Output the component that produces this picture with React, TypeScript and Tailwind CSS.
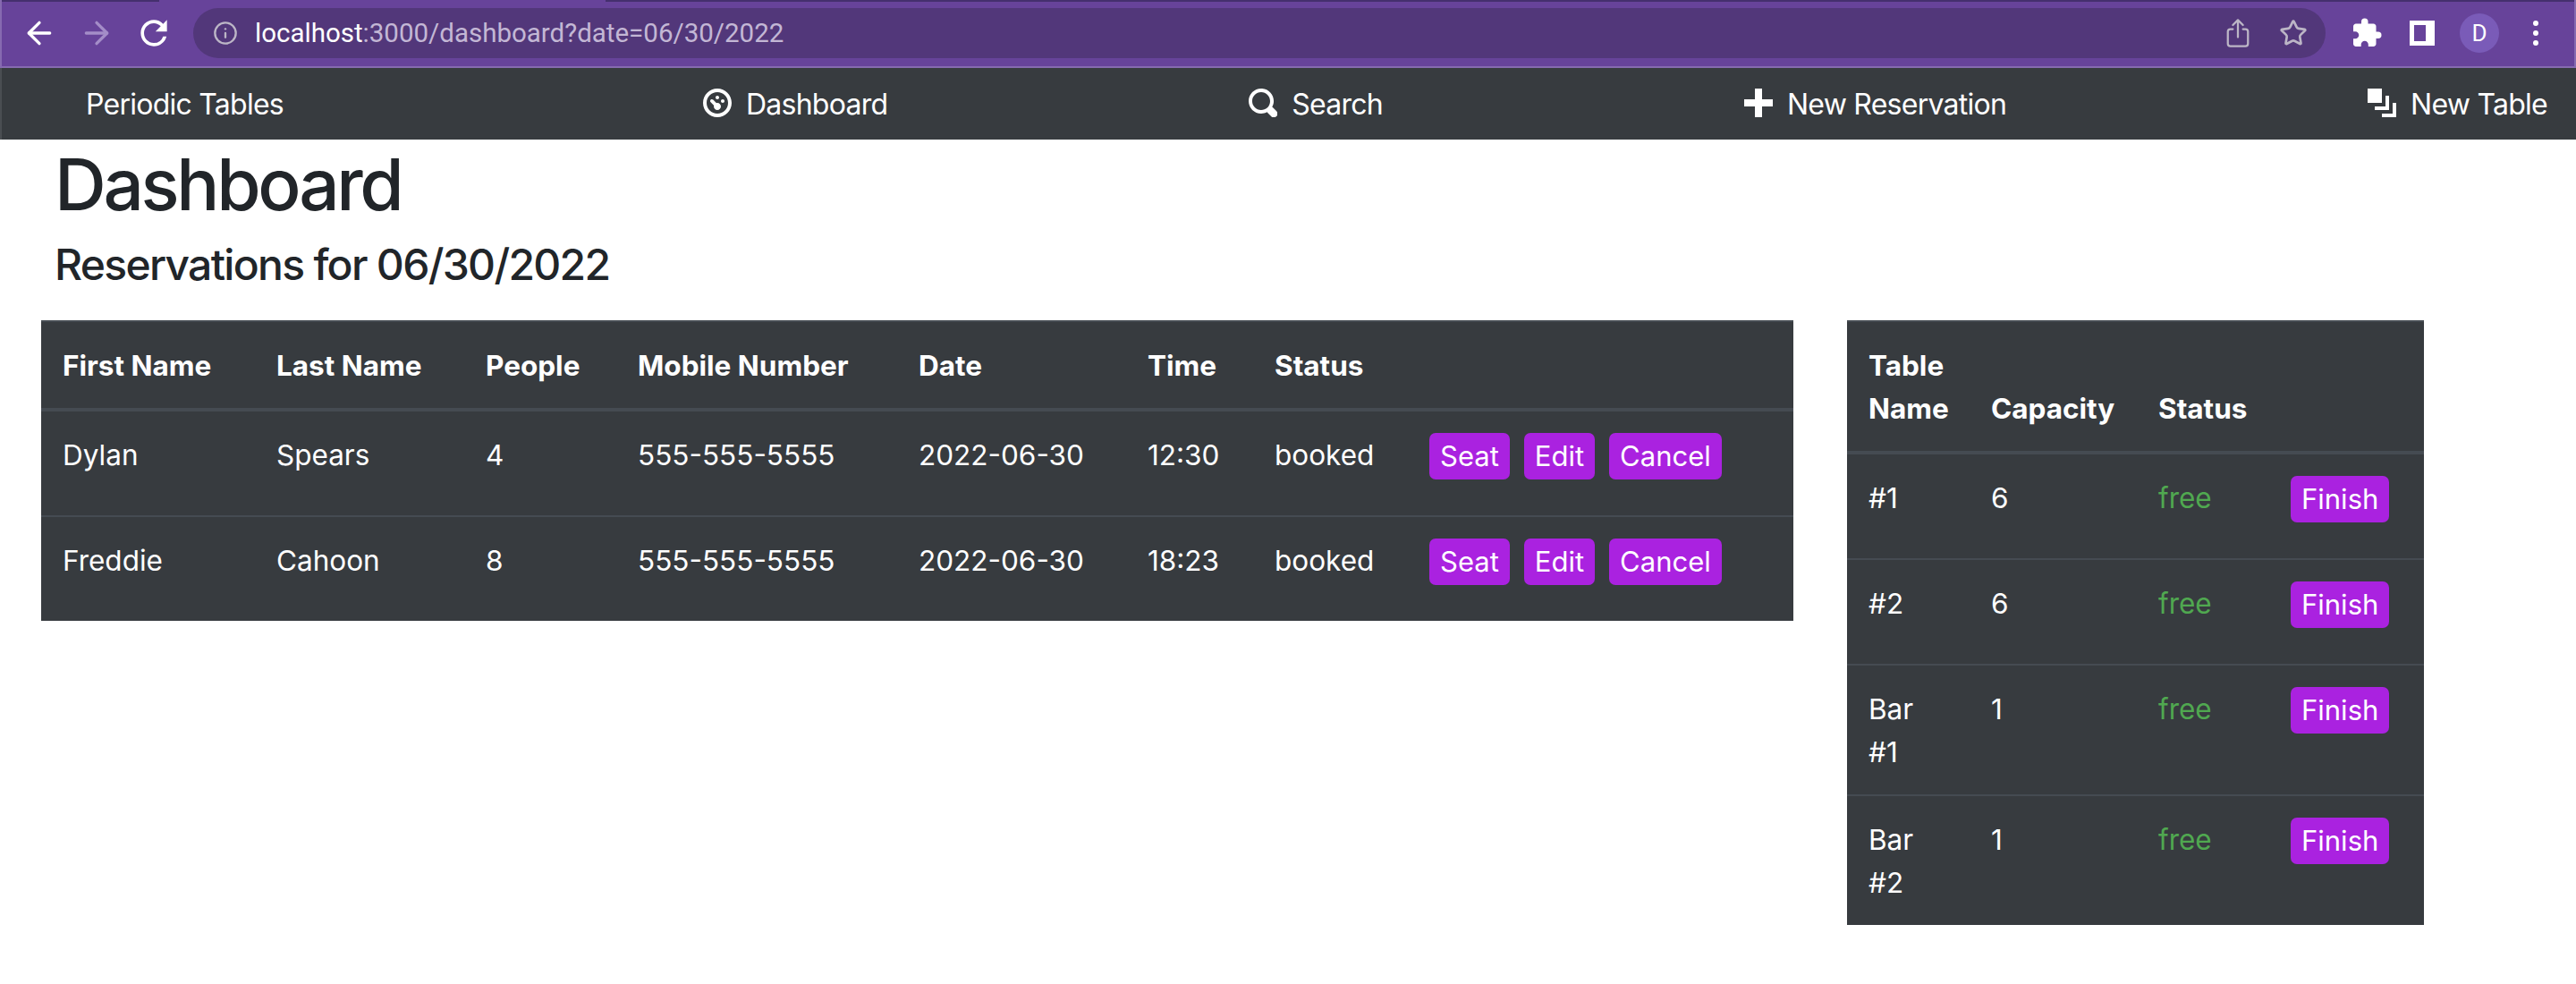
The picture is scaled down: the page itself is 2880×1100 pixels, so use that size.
import { ArrowLeft, ArrowRight, Info, Star } from "lucide-react";
import { IoShareOutline } from "react-icons/io5";
import { MdExtension, MdRefresh } from "react-icons/md";

const reservations = [
  { first: "Dylan", last: "Spears", people: 4, mobile: "555-555-5555", date: "2022-06-30", time: "12:30" },
  { first: "Freddie", last: "Cahoon", people: 8, mobile: "555-555-5555", date: "2022-06-30", time: "18:23" },
];

const tables = [
  { name: "#1", capacity: 6 },
  { name: "#2", capacity: 6 },
  { name: "Bar #1", capacity: 1 },
  { name: "Bar #2", capacity: 1 },
];

function NavIcon({ d }: { d: string }) {
  return (
    <svg viewBox="0 0 8 8" className="h-8 w-8 fill-white">
      <path d={d} />
    </svg>
  );
}

function NavItem({ d, label }: { d: string; label: string }) {
  return (
    <div className="flex items-center gap-[16px]">
      <div className="-mt-[3px]">
        <NavIcon d={d} />
      </div>
      <span className="pt-[1px]">{label}</span>
    </div>
  );
}

function ActionButton({ label }: { label: string }) {
  return (
    <button className="h-[52px] rounded-[7px] bg-[#aa22e0] px-[12px] text-[31px] leading-[52px] text-white">
      {label}
    </button>
  );
}

function BrowserBar() {
  return (
    <div className="relative h-[76px] border-b-2 border-x-2 border-[#866ab0] border-t-0 bg-[#67439a]">
      {/* tab strip remnants */}
      <div className="absolute left-0 top-0 h-[2px] w-[176px] bg-[#452f6e]" />
      <div className="absolute left-[675px] right-0 top-0 h-[2px] bg-[#452f6e]" />
      <div className="flex h-[74px] items-center pl-[22px] pr-[32px]">
        <ArrowLeft className="h-10 w-10 text-white" strokeWidth={2} />
        <ArrowRight className="ml-[24px] h-10 w-10 text-[#a48dc8]" strokeWidth={2} />
        <MdRefresh className="ml-[22px] h-[44px] w-[44px] text-white" />
        <div className="ml-[22px] flex h-[56px] w-[2384px] shrink-0 items-center rounded-full bg-[#52377a] pl-[22px] pr-[18px] font-['Roboto',sans-serif] text-[29.5px] text-[#c3b7d5]">
          <Info className="h-[28px] w-[28px] text-[#bcb6c6]" strokeWidth={2} />
          <span className="ml-[19px]">
            <span className="text-white">localhost</span>:3000/dashboard?date=06/30/2022
          </span>
          <div className="ml-auto flex items-center gap-[28px] pr-[2px]">
            <IoShareOutline className="h-[36px] w-[36px] text-[#bcb6c6]" />
            <Star className="h-[32px] w-[32px] text-[#bcb6c6]" strokeWidth={2} />
          </div>
        </div>
        <MdExtension className="ml-[28px] h-[36px] w-[36px] text-white" />
        <div className="ml-[30px] h-[28px] w-[28px] border-[5px] border-r-[10px] border-white bg-[#67439a]" />
        <div className="ml-[28px] flex h-[44px] w-[44px] items-center justify-center rounded-full bg-[#7a5bb8] font-['Roboto',sans-serif] text-[26px] text-white">
          D
        </div>
        <div className="ml-[38px] flex flex-col gap-[5px]">
          <div className="h-[6px] w-[6px] rounded-full bg-white" />
          <div className="h-[6px] w-[6px] rounded-full bg-white" />
          <div className="h-[6px] w-[6px] rounded-full bg-white" />
        </div>
      </div>
    </div>
  );
}

function TopNav() {
  return (
    <div className="flex h-[80px] items-center justify-between border-l-2 border-[#4a4e52] bg-[#373b3f] pl-[94px] pr-[32px] text-[32px] tracking-[-0.75px] text-white">
      <span className="pr-[65px] pt-[1px]">Periodic Tables</span>
      <NavItem
        label="Dashboard"
        d="M4 0c-2.2 0-4 1.8-4 4s1.8 4 4 4 4-1.8 4-4-1.8-4-4-4zm0 1c1.66 0 3 1.34 3 3s-1.34 3-3 3-3-1.34-3-3 1.34-3 3-3zm0 1c-.28 0-.5.22-.5.5s.22.5.5.5.5-.22.5-.5-.22-.5-.5-.5zm-1.66 1a.5.5 0 0 0-.19.84l.91.91c-.02.08-.06.16-.06.25 0 .55.45 1 1 1s1-.45 1-1-.45-1-1-1c-.09 0-.17.04-.25.06l-.91-.91a.5.5 0 0 0-.44-.16.5.5 0 0 0-.06 0zm3.16 0c-.28 0-.5.22-.5.5s.22.5.5.5.5-.22.5-.5-.22-.5-.5-.5z"
      />
      <NavItem
        label="Search"
        d="M3.5 0c-1.93 0-3.5 1.57-3.5 3.5s1.57 3.5 3.5 3.5c.59 0 1.17-.14 1.66-.41a1 1 0 0 0 .13.13l1 1a1.02 1.02 0 1 0 1.44-1.44l-1-1a1 1 0 0 0-.16-.13c.27-.49.44-1.06.44-1.66 0-1.93-1.57-3.5-3.5-3.5zm0 1c1.39 0 2.5 1.11 2.5 2.5 0 .66-.24 1.27-.66 1.72-.01.01-.02.02-.03.03a1 1 0 0 0-.13.13c-.44.4-1.04.63-1.69.63-1.39 0-2.5-1.11-2.5-2.5s1.11-2.5 2.5-2.5z"
      />
      <NavItem label="New Reservation" d="M3 0v3h-3v2h3v3h2v-3h3v-2h-3v-3h-2z" />
      <NavItem label="New Table" d="M0 0v4h4v-4h-4zm5 2v3h-3v1h4v-4h-1zm2 2v3h-3v1h4v-4h-1z" />
    </div>
  );
}

export default function App() {
  const th = "border-t-2 border-b-4 border-[#454b52] px-[24px] pt-[25px] pb-[23px] text-left align-bottom font-bold";
  const td = "border-t-2 border-[#454b52] px-[24px] pt-[25px] pb-[23px] align-top";
  const first = "px-[24px] pt-[25px] pb-[23px] align-top";
  const cols = ["w-[239px]", "w-[234px]", "w-[170px]", "w-[314px]", "w-[256px]", "w-[142px]", "w-[173px]", "w-[431px]"];
  const sideCols = ["w-[137px]", "w-[187px]", "w-[148px]", "w-[173px]"];

  return (
    <div className="min-h-[1100px] bg-white font-['Inter',sans-serif] text-[31.5px] leading-[48px]">
      <BrowserBar />
      <TopNav />

      <div className="pl-[61px] pt-[2px] text-[#212529]">
        <h1 className="text-[80px] leading-[96px] font-medium tracking-[-3.3px]">Dashboard</h1>
        <h2 className="mt-[13px] text-[48px] leading-[58px] font-medium tracking-[-1.7px]">Reservations for 06/30/2022</h2>
      </div>

      <div className="mt-[33px] flex items-start pl-[46px] text-white">
        <table className="w-[1959px] table-fixed border-separate border-spacing-0 bg-[#373b3f]">
          <colgroup>
            {cols.map((c) => (
              <col key={c} className={c} />
            ))}
          </colgroup>
          <thead>
            <tr>
              <th className={th}>First Name</th>
              <th className={th}>Last Name</th>
              <th className={th}>People</th>
              <th className={th}>Mobile Number</th>
              <th className={th}>Date</th>
              <th className={th}>Time</th>
              <th className={th}>Status</th>
              <th className={th}></th>
            </tr>
          </thead>
          <tbody>
            {reservations.map((r, i) => (
              <tr key={r.first}>
                <td className={i ? td : first}>{r.first}</td>
                <td className={i ? td : first}>{r.last}</td>
                <td className={i ? td : first}>{r.people}</td>
                <td className={i ? td : first}>{r.mobile}</td>
                <td className={i ? td : first}>{r.date}</td>
                <td className={i ? td : first}>{r.time}</td>
                <td className={i ? td : first}>booked</td>
                <td className={i ? td : first}>
                  <div className="-mt-[1px] flex h-[69px] items-start gap-[16px] whitespace-nowrap">
                    <ActionButton label="Seat" />
                    <ActionButton label="Edit" />
                    <ActionButton label="Cancel" />
                  </div>
                </td>
              </tr>
            ))}
          </tbody>
        </table>

        <table className="ml-[60px] w-[645px] table-fixed border-separate border-spacing-0 bg-[#373b3f]">
          <colgroup>
            {sideCols.map((c) => (
              <col key={c} className={c} />
            ))}
          </colgroup>
          <thead>
            <tr>
              <th className={th}>Table Name</th>
              <th className={th}>Capacity</th>
              <th className={th}>Status</th>
              <th className={th}></th>
            </tr>
          </thead>
          <tbody>
            {tables.map((t, i) => (
              <tr key={t.name}>
                <td className={i ? td : first}>{t.name}</td>
                <td className={i ? td : first}>{t.capacity}</td>
                <td className={`${i ? td : first} text-[#50a850]`}>free</td>
                <td className={i ? td : first}>
                  <div className="-mt-[1px] h-[69px]">
                    <ActionButton label="Finish" />
                  </div>
                </td>
              </tr>
            ))}
          </tbody>
        </table>
      </div>
    </div>
  );
}
